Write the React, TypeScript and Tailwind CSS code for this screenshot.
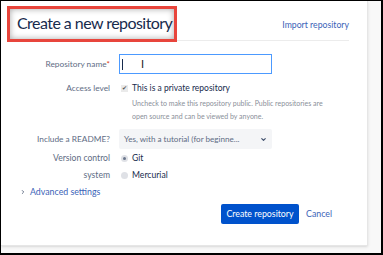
import React from 'react';
import { ChevronDown, ChevronRight } from 'lucide-react';

const font = { fontFamily: 'Lato, "Open Sans", sans-serif' };

function Label({ children }: { children: React.ReactNode }) {
  return <div className="w-[118px] shrink-0 pr-[9px] text-right text-[8.3px] leading-[12px] text-[#5e6c84]">{children}</div>;
}

export default function App() {
  return (
    <div className="w-[383px] h-[255px] bg-black pl-px pt-px pr-[2px] pb-[2px]" style={font}>
      <div className="h-full bg-[#f8f8f8] flex">
        <div className="relative w-[367px] h-[245px] bg-white border-r border-b border-[#e6e6e6] shadow-sm">
          {/* header */}
          <div className="mx-[9px] mr-[18px] h-[40px] flex items-center justify-between border-b border-[#ececec] pl-[7px]">
            <h1 className="text-[16px] tracking-[-0.55px] font-normal text-[#172b4d] mt-[4px]">Create a new repository</h1>
            <a className="text-[8.7px] text-[#3b63b8] mt-[9px]">Import repository</a>
          </div>

          {/* annotation box */}
          <div className="absolute left-[6px] top-[5px] w-[170px] h-[36px] border-[3px] border-[#e8453c] shadow-[inset_0_0_6px_rgba(0,0,0,0.35)]" />

          <div className="pt-[13px]">
            {/* name */}
            <div className="flex items-center">
              <Label>
                Repository name<span className="text-[#de350b] align-top text-[8px]">*</span>
              </Label>
              <div className="relative w-[153px] h-[20px] border border-[#4c9aff] flex items-center pl-[2px]">
                <div className="w-px h-[11px] bg-[#172b4d]" />
                <span className="absolute left-[21px] top-[3px] text-[11px] leading-[12px] text-[#222]">I</span>
              </div>
            </div>

            {/* access */}
            <div className="flex mt-[8px]">
              <Label>Access level</Label>
              <div className="pl-[2px]">
                <div className="flex items-center gap-[4px]">
                  <div className="w-[7px] h-[7px] bg-[#eaeaea] flex items-center justify-center text-[6px] leading-none text-[#555]">✔</div>
                  <span className="text-[8.5px] leading-[12px] text-[#172b4d]">This is a private repository</span>
                </div>
                <p className="ml-[11px] mt-[3px] text-[7px] leading-[13px] text-[#8a8f99] w-[203px]">
                  Uncheck to make this repository public. Public repositories are open source and can be viewed by anyone.
                </p>
              </div>
            </div>

            {/* readme */}
            <div className="flex items-center mt-[6px]">
              <Label>Include a README?</Label>
              <div className="w-[153px] h-[20px] bg-[#f4f5f7] rounded-[2px] flex items-center justify-between pl-[5px] pr-[5px]">
                <span className="text-[8.1px] text-[#5e6c84] whitespace-nowrap">Yes, with a tutorial (for beginne...</span>
                <ChevronDown className="w-[7px] h-[7px] text-[#42526e]" strokeWidth={4} />
              </div>
            </div>

            {/* vcs */}
            <div className="flex mt-[1px]">
              <div className="w-[118px] shrink-0 pr-[9px] text-right text-[8.6px] leading-[17px] text-[#5e6c84]">
                Version control<br />system
              </div>
              <div className="pl-[2px] text-[8.6px] leading-[17px] text-[#172b4d]">
                <div className="flex items-center gap-[4px]">
                  <span className="w-[7px] h-[7px] rounded-full bg-[#dfe1e6] flex items-center justify-center">
                    <span className="w-[3px] h-[3px] rounded-full bg-[#6b778c]" />
                  </span>
                  Git
                </div>
                <div className="flex items-center gap-[4px]">
                  <span className="w-[7px] h-[7px] rounded-full bg-[#dfe1e6]" />
                  Mercurial
                </div>
              </div>
            </div>

            {/* advanced */}
            <div className="flex items-center gap-[4px] pl-[19px] mt-[2px] text-[8.8px] leading-[12px] text-[#3b63b8]">
              <ChevronRight className="w-[6px] h-[6px] text-[#6b778c]" strokeWidth={4} />
              Advanced settings
            </div>

            {/* actions */}
            <div className="flex items-center justify-end pr-[35px] mt-[6px] gap-[7px]">
              <button className="w-[78px] h-[20px] bg-[#0052cc] rounded-[2px] text-[8.8px] text-white">Create repository</button>
              <a className="text-[8.8px] text-[#3b63b8]">Cancel</a>
            </div>
          </div>
        </div>
      </div>
    </div>
  );
}
